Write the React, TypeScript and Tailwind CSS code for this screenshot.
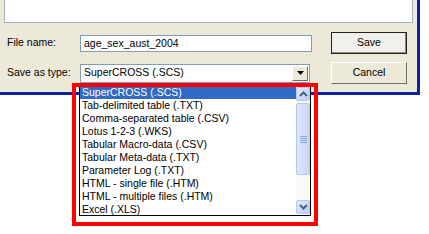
import React from 'react';

const fileTypes = [
  'SuperCROSS (.SCS)',
  'Tab-delimited table (.TXT)',
  'Comma-separated table (.CSV)',
  'Lotus 1-2-3 (.WKS)',
  'Tabular Macro-data (.CSV)',
  'Tabular Meta-data (.TXT)',
  'Parameter Log (.TXT)',
  'HTML - single file (.HTM)',
  'HTML - multiple files (.HTM)',
  'Excel (.XLS)',
];

function ScrollArrow({ up }: { up?: boolean }) {
  return (
    <div className="w-[14px] h-[14px] rounded-[2px] border border-[#b7c8f2] bg-gradient-to-br from-[#e2eafe] to-[#b9cdf7] flex items-center justify-center">
      <svg width="9" height="6" viewBox="0 0 9 6">
        <path
          d={up ? 'M1 5 L4.5 1.5 L8 5' : 'M1 1 L4.5 4.5 L8 1'}
          fill="none"
          stroke="#4d6185"
          strokeWidth="2"
        />
      </svg>
    </div>
  );
}

export default function App() {
  return (
    <div
      className="relative w-[429px] h-[234px] bg-white overflow-hidden text-[10.5px] text-black"
      style={{ fontFamily: '"Liberation Sans", Arial, sans-serif' }}
    >
      {/* dialog */}
      <div className="w-[420px] h-[95px] bg-[#ece9d8] border-r-[3px] border-b-[3px] border-[#0a22a8]">
        <div className="ml-[4px] w-[409px] h-[23px] bg-white border-x border-b border-[#9fb0c9]" />

        <div className="mt-[9px] flex flex-col gap-[8px]">
          <div className="flex items-center h-[22px]">
            <span className="w-[80px] pl-[7px]">File name:</span>
            <div className="w-[232px] h-[17px] border border-[#7f9db9] bg-white pl-[3px] leading-[15px]">
              age_sex_aust_2004
            </div>
            <button className="ml-[19px] w-[76px] h-[22px] border border-[#222] bg-[#f1f0ea] shadow-[inset_-1px_-1px_0_#8c8a80]">
              Save
            </button>
          </div>

          <div className="flex items-center h-[22px]">
            <span className="w-[80px] pl-[7px]">Save as type:</span>
            <div className="w-[230px] h-[19px] border border-[#7f9db9] bg-white pl-[3px] flex items-center justify-between">
              <span>SuperCROSS (.SCS)</span>
              <div className="w-[16px] h-[15px] mr-[1px] bg-[#ece9d8] border-t border-l border-white border-r border-b border-r-[#716f64] border-b-[#716f64] flex items-center justify-center">
                <svg width="7" height="4" viewBox="0 0 7 4">
                  <path d="M0 0 H7 L3.5 4 Z" fill="#000" />
                </svg>
              </div>
            </div>
            <button className="ml-[21px] w-[76px] h-[22px] bg-[#ece9d8] border border-t-white border-l-white border-r-[#716f64] border-b-[#716f64]">
              Cancel
            </button>
          </div>
        </div>
      </div>

      {/* dropdown list */}
      <div className="absolute left-[79px] top-[85px] w-[232px] h-[131px] bg-white border border-black flex">
        <div className="flex-1 flex flex-col">
          {fileTypes.map((t, i) => (
            <div
              key={t}
              className={
                i === 0
                  ? 'h-[13px] leading-[13px] pl-[2px] bg-[#316ac5] text-white'
                  : 'h-[13px] leading-[13px] pl-[2px]'
              }
            >
              {t}
            </div>
          ))}
        </div>
        <div className="w-[14px] bg-[#f9f9f6] flex flex-col pt-[1px] pb-[1px]">
          <ScrollArrow up />
          <div className="mt-[2px] h-[72px] rounded-[2px] border border-[#b4c8f6] bg-gradient-to-r from-[#dfe8fd] to-[#c7d7fb] flex flex-col items-center justify-center gap-[1px]">
            <div className="w-[7px] h-px bg-[#8ba6e6]" />
            <div className="w-[7px] h-px bg-[#8ba6e6]" />
            <div className="w-[7px] h-px bg-[#8ba6e6]" />
            <div className="w-[7px] h-px bg-[#8ba6e6]" />
          </div>
          <div className="flex-1" />
          <ScrollArrow />
        </div>
      </div>

      {/* highlight box */}
      <div className="absolute left-[72px] top-[83px] w-[246px] h-[143px] border-4 border-[#ff0000] pointer-events-none" />
    </div>
  );
}
